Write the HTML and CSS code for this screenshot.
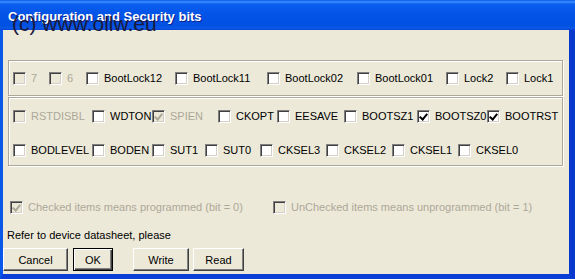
FILE: index.html
```html
<!DOCTYPE html>
<html lang="en">
<head>
    <meta charset="UTF-8">
    <title>Configuration and Security bits</title>
    <link rel="stylesheet" href="styles.css">
</head>
<body>
    <div class="window">
        <!-- Title bar with the watermark drawn over it -->
        <div class="titlebar">
            <span class="title">Configuration and Security bits</span>
            <span class="watermark">(c) www.ollw.eu</span>
        </div>

        <div class="client">
            <!-- Lock bits -->
            <div class="group">
                <div class="row row-lock">
                    <label class="bit disabled"><span class="box"></span>7</label>
                    <label class="bit disabled"><span class="box"></span>6</label>
                    <label class="bit"><span class="box"></span>BootLock12</label>
                    <label class="bit"><span class="box"></span>BootLock11</label>
                    <label class="bit"><span class="box"></span>BootLock02</label>
                    <label class="bit"><span class="box"></span>BootLock01</label>
                    <label class="bit"><span class="box"></span>Lock2</label>
                    <label class="bit"><span class="box"></span>Lock1</label>
                </div>
            </div>

            <!-- Fuse bits -->
            <div class="group fuses">
                <div class="row row-high">
                    <label class="bit disabled"><span class="box"></span>RSTDISBL</label>
                    <label class="bit"><span class="box"></span>WDTON</label>
                    <label class="bit disabled"><span class="box checked"></span>SPIEN</label>
                    <label class="bit"><span class="box"></span>CKOPT</label>
                    <label class="bit"><span class="box"></span>EESAVE</label>
                    <label class="bit"><span class="box"></span>BOOTSZ1</label>
                    <label class="bit"><span class="box checked"></span>BOOTSZ0</label>
                    <label class="bit"><span class="box checked"></span>BOOTRST</label>
                </div>
                <div class="row row-low">
                    <label class="bit"><span class="box"></span>BODLEVEL</label>
                    <label class="bit"><span class="box"></span>BODEN</label>
                    <label class="bit"><span class="box"></span>SUT1</label>
                    <label class="bit"><span class="box"></span>SUT0</label>
                    <label class="bit"><span class="box"></span>CKSEL3</label>
                    <label class="bit"><span class="box"></span>CKSEL2</label>
                    <label class="bit"><span class="box"></span>CKSEL1</label>
                    <label class="bit"><span class="box"></span>CKSEL0</label>
                </div>
            </div>

            <div class="legend">
                <label class="bit disabled"><span class="box checked"></span>Checked items means programmed (bit = 0)</label>
                <label class="bit disabled"><span class="box"></span>UnChecked items means unprogrammed (bit = 1)</label>
            </div>

            <p class="note">Refer to device datasheet, please</p>

            <div class="buttons">
                <button class="btn btn-cancel">Cancel</button>
                <button class="btn btn-ok default">OK</button>
                <button class="btn btn-write">Write</button>
                <button class="btn btn-read">Read</button>
            </div>
        </div>
    </div>
</body>
</html>
```

FILE: styles.css
```css
/* Basic page setup */
body, html {
    margin: 0;
    padding: 0;
    background-color: #ffffff;
}

.window {
    width: 575px;
    height: 279px;
    box-sizing: border-box;
    display: flex;
    flex-direction: column;
    background-color: #0a46dc;
    border-left: 3px solid #0a58ea;
    border-right: 6px solid #0838cc;
    border-bottom: 5px solid #0a3ed6;
    font-family: "Liberation Sans", Arial, sans-serif;
    font-size: 11px;
    color: #000000;
}

/* XP style title bar */
.titlebar {
    position: relative;
    height: 30px;
    margin-left: -3px;
    margin-right: -6px;
    background: linear-gradient(#0a5cec 0, #3d8ffc 2px, #0a5ef0 4px, #0456e8 40%, #0050e2 85%, #0a5ae8 93%, #0a44d4 100%);
}

.title {
    position: absolute;
    left: 8px;
    top: 9px;
    font-size: 13px;
    font-weight: bold;
    color: #ffffff;
    text-shadow: 1px 1px 0 #0a1e8e;
}

/* The watermark sits on top of the title */
.watermark {
    position: absolute;
    left: 12px;
    top: 13px;
    font-size: 21px;
    line-height: 21px;
    color: #1a1a3c;
    white-space: nowrap;
}

.client {
    flex: 1;
    background-color: #ece9d8;
    display: flex;
    flex-direction: column;
}

/* Etched group boxes */
.group {
    margin: 30px 6px 0 5px;
    padding: 9px 0 9px 4px;
    border: 1px solid #aca899;
    box-shadow: inset 1px 1px 0 #ffffff, 1px 1px 0 #ffffff;
}

.group.fuses {
    margin-top: 1px;
    padding: 10px 0 7px 4px;
    display: flex;
    flex-direction: column;
    gap: 18px;
}

.row {
    display: grid;
    align-items: center;
    height: 16px;
}

.row-lock {
    grid-template-columns: 36px 37px 89px 92px 90px 89px 60px auto;
}

.row-high {
    grid-template-columns: 79px 60px 66px 59px 67px 73px 70px auto;
}

.row-low {
    grid-template-columns: 79px 60px 53px 55px 66px 66px 66px auto;
}

.bit {
    display: flex;
    align-items: center;
    white-space: nowrap;
}

.bit.disabled {
    color: #aca899;
}

/* Classic sunken check box */
.box {
    position: relative;
    width: 13px;
    height: 13px;
    box-sizing: border-box;
    margin-right: 5px;
    flex-shrink: 0;
    background-color: #ffffff;
    border-top: 1px solid #808080;
    border-left: 1px solid #808080;
    border-right: 1px solid #ffffff;
    border-bottom: 1px solid #ffffff;
    box-shadow: inset 1px 1px 0 #404040, inset -1px -1px 0 #d4d0c8;
}

.disabled .box {
    background-color: #ece9d8;
}

.box.checked::after {
    content: "";
    position: absolute;
    left: 3px;
    top: 1px;
    width: 3px;
    height: 6px;
    border-right: 2px solid #000000;
    border-bottom: 2px solid #000000;
    transform: rotate(40deg);
}

.disabled .box.checked::after {
    border-color: #aca899;
}

.legend {
    display: grid;
    grid-template-columns: 263px auto;
    align-items: center;
    height: 16px;
    margin-top: 33px;
    padding-left: 7px;
}

.note {
    margin: 12px 0 0 4px;
    line-height: 16px;
}

.buttons {
    display: flex;
    margin-top: 5px;
}

.btn {
    height: 23px;
    padding: 0;
    font-family: "Liberation Sans", Arial, sans-serif;
    font-size: 11px;
    color: #000000;
    background-color: #ece9d8;
    border: 1px solid;
    border-color: #ffffff #404040 #404040 #ffffff;
    box-shadow: inset -1px -1px 0 #808080;
}

.btn.default {
    border-color: #000000;
    box-shadow: inset 1px 1px 0 #ffffff, inset -1px -1px 0 #404040, inset -2px -2px 0 #808080;
}

.btn-cancel {
    width: 65px;
}

.btn-ok {
    width: 40px;
    margin-left: 5px;
}

.btn-write {
    width: 56px;
    margin-left: 20px;
}

.btn-read {
    width: 51px;
    margin-left: 4px;
}
```
